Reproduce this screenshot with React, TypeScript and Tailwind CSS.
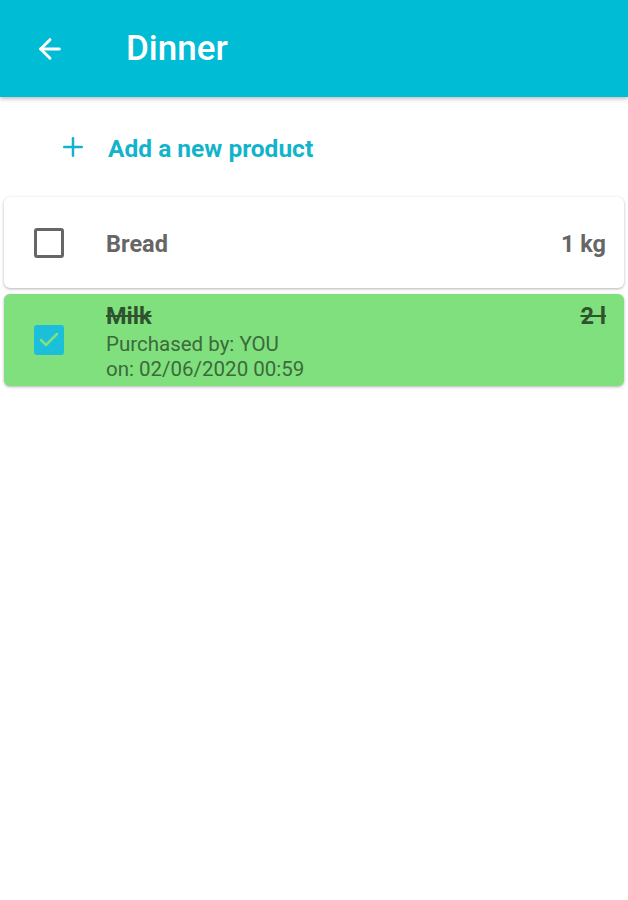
import { ArrowLeft, Plus, Check } from "lucide-react";

const font = { fontFamily: "Roboto, 'Noto Sans', sans-serif" };

function Checkbox({ checked }: { checked: boolean }) {
  if (checked) {
    return (
      <div className="flex items-center justify-center w-[30px] h-[30px] rounded-[3px] bg-[#1cbfd9] shrink-0">
        <Check className="w-[24px] h-[24px] text-[#80e07e]" strokeWidth={2.5} />
      </div>
    );
  }
  return <div className="w-[30px] h-[30px] rounded-[3px] border-[3px] border-[#666666] shrink-0" />;
}

export default function App() {
  return (
    <div className="w-[628px] h-[900px] bg-white" style={font}>
      {/* Toolbar */}
      <div className="flex items-center h-[97px] bg-[#00bcd4] shadow-[0_2px_4px_rgba(0,0,0,0.25)]">
        <ArrowLeft className="w-[32px] h-[32px] ml-[34px] text-white" strokeWidth={2.2} />
        <h1 className="ml-[60px] text-[35px] font-medium text-white leading-none">Dinner</h1>
      </div>

      {/* Add product */}
      <div className="flex items-center h-[100px] pl-[58px]">
        <Plus className="w-[30px] h-[30px] text-[#13b3cc]" strokeWidth={2} />
        <span className="ml-[20px] pt-[4px] text-[24.5px] font-bold text-[#13b3cc]">Add a new product</span>
      </div>

      {/* List */}
      <div className="flex flex-col gap-[6px] px-[4px]">
        <div className="flex items-center h-[91px] pl-[30px] pr-[18px] bg-white rounded-[6px] shadow-[0_1px_3px_rgba(0,0,0,0.3)]">
          <Checkbox checked={false} />
          <span className="ml-[42px] pt-[4px] text-[23.5px] font-bold text-[#666666] flex-1">Bread</span>
          <span className="pt-[4px] text-[23.5px] font-bold text-[#666666]">1 kg</span>
        </div>

        <div className="flex items-center h-[92px] pl-[30px] pr-[18px] bg-[#80e07e] rounded-[6px] shadow-[0_1px_3px_rgba(0,0,0,0.3)]">
          <Checkbox checked={true} />
          <div className="ml-[42px] flex-1 flex flex-col self-start pt-[7px]">
            <span className="text-[23.5px] font-bold text-[#2f532f] line-through leading-[31px]">Milk</span>
            <span className="text-[20.5px] text-[#3b6a3b] leading-[25px]">Purchased by: YOU</span>
            <span className="text-[20.5px] text-[#3b6a3b] leading-[25px]">on: 02/06/2020 00:59</span>
          </div>
          <span className="self-start pt-[7px] text-[23.5px] leading-[31px] font-bold text-[#2f532f] line-through">2 l</span>
        </div>
      </div>
    </div>
  );
}
